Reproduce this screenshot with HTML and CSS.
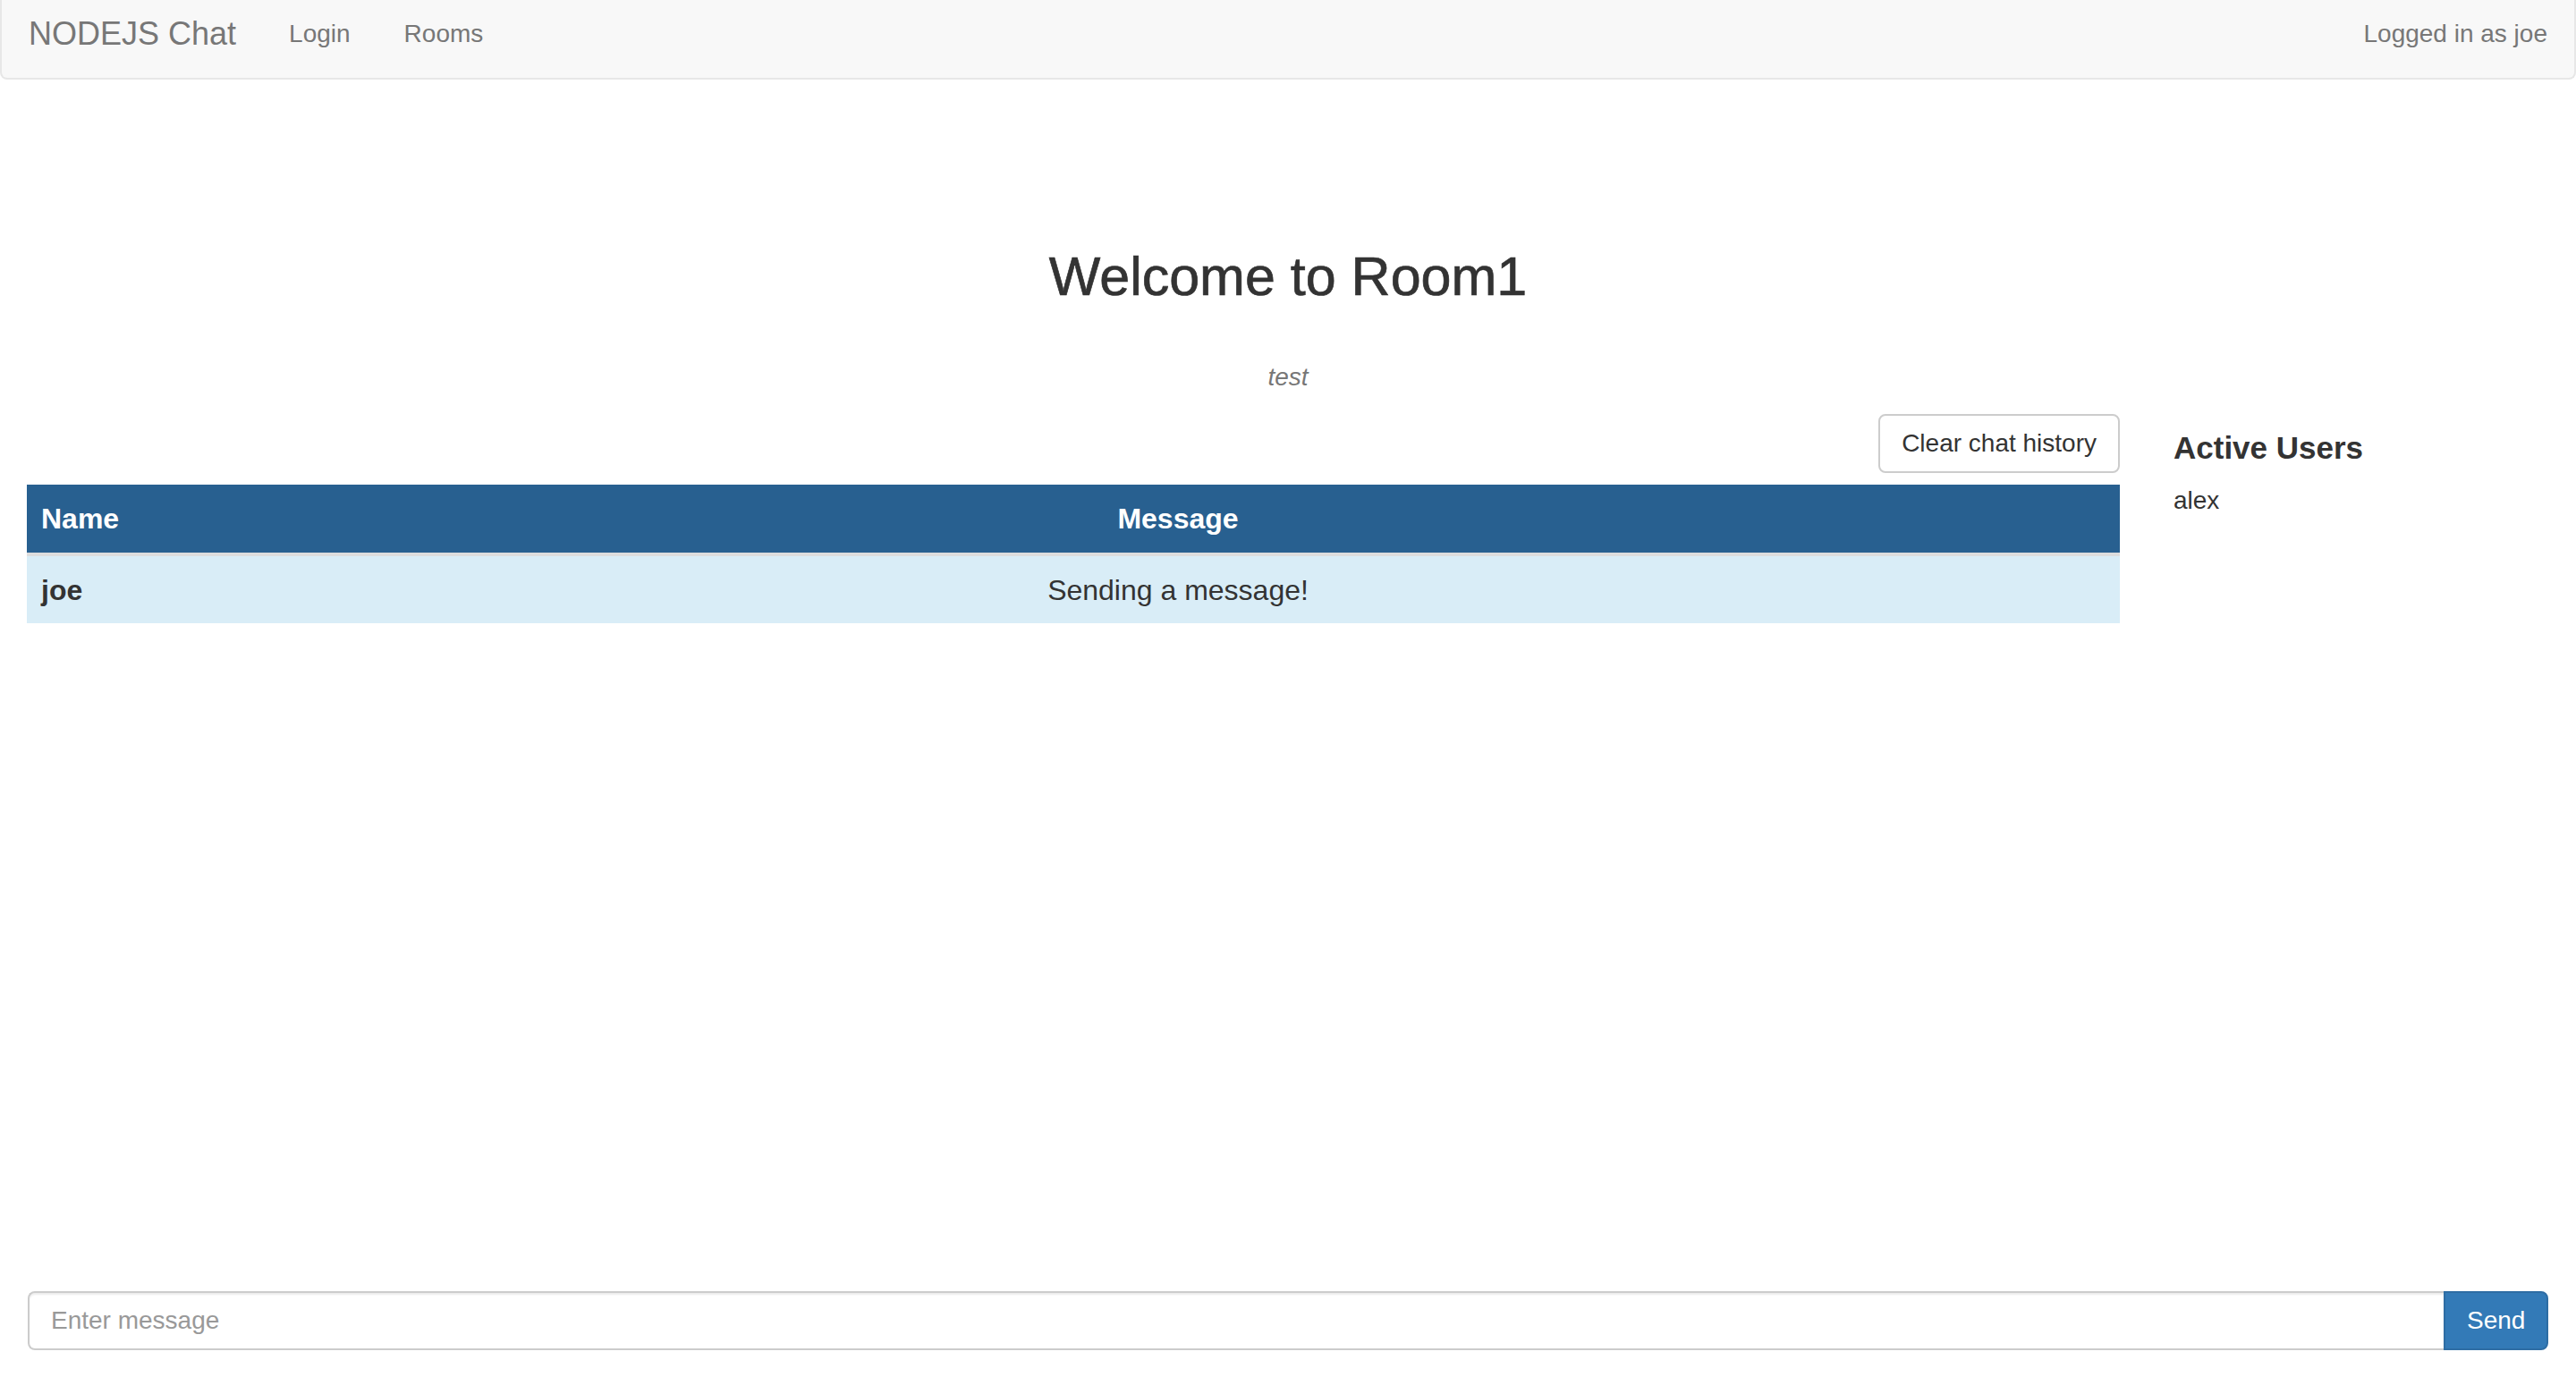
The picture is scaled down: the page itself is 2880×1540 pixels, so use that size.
FILE: index.html
```html
<!DOCTYPE html>
<html lang="en">
<head>
<meta charset="utf-8">
<title>NODEJS Chat</title>
<link rel="stylesheet" href="styles.css">
</head>
<body>
<nav class="navbar">
  <div class="nav-left">
    <a class="brand" href="#">NODEJS Chat</a>
    <a class="nav-link" href="#">Login</a>
    <a class="nav-link" href="#">Rooms</a>
  </div>
  <div class="nav-text">Logged in as joe</div>
</nav>
<main class="main">
  <h2 class="title">Welcome to Room1</h2>
  <p class="desc">test</p>
  <div class="row">
    <section class="chat-col">
      <div class="toolbar"><button class="btn" type="button">Clear chat history</button></div>
      <table class="chat-table">
        <colgroup><col class="col-name"><col></colgroup>
        <thead>
          <tr><th class="th-name">Name</th><th class="th-msg">Message</th></tr>
        </thead>
        <tbody>
          <tr><td class="td-name">joe</td><td class="td-msg">Sending a message!</td></tr>
        </tbody>
      </table>
    </section>
    <aside class="users-col">
      <h4 class="users-title">Active Users</h4>
      <div class="user">alex</div>
    </aside>
  </div>
</main>
<form class="composer">
  <input class="composer-input" type="text" placeholder="Enter message">
  <button class="btn-send" type="button">Send</button>
</form>
</body>
</html>
```

FILE: styles.css
```css
* { box-sizing: border-box; }
html, body { margin: 0; padding: 0; }
body {
  font-family: "Liberation Sans", Arial, Helvetica, sans-serif;
  font-size: 28px;
  line-height: 40px;
  color: #333;
  background: #fff;
  min-height: 100vh;
  display: flex;
  flex-direction: column;
}
a { text-decoration: none; }

.navbar {
  height: 89px;
  background: #f8f8f8;
  border: 2px solid #e7e7e7;
  border-top: 0;
  border-radius: 0 0 8px 8px;
  display: flex;
  justify-content: space-between;
  align-items: flex-start;
  padding: 18px 30px 0 30px;
  flex: none;
}
.nav-left { display: flex; align-items: flex-start; }
.brand {
  font-size: 36px;
  line-height: 40px;
  color: #777;
  margin-right: 29px;
}
.nav-link {
  color: #777;
  line-height: 40px;
  padding: 0 30px;
}
.nav-text { color: #777; line-height: 40px; }

.main { flex: 1; }
.title {
  margin: 187px 0 0 0;
  font-size: 61px;
  line-height: 66px;
  font-weight: 400;
  text-align: center;
  color: #333;
  -webkit-text-stroke: 0.7px #333;
}
.desc {
  margin: 60px 0 21px 0;
  text-align: center;
  font-style: italic;
  color: #777;
}
.row { display: flex; }
.chat-col { width: 2400px; padding: 0 30px; flex: none; }
.users-col { flex: 1; padding: 0 30px; }

.toolbar { display: flex; justify-content: flex-end; margin-bottom: 13px; }
.btn {
  font-family: inherit;
  font-size: 28px;
  line-height: 40px;
  color: #333;
  background: #fff;
  border: 2px solid #ccc;
  border-radius: 8px;
  padding: 11px 24px;
}

.chat-table {
  width: 100%;
  border-collapse: collapse;
  table-layout: fixed;
  font-size: 32px;
  line-height: 44px;
}
.col-name { width: 10%; }
.chat-table th {
  background: #286090;
  color: #fff;
  font-weight: 700;
  padding: 16px 16px;
  border-bottom: 4px solid #ddd;
}
.th-name { text-align: left; }
.th-msg { text-align: center; }
.chat-table td {
  background: #d9edf7;
  padding: 16px 16px 15px 16px;
}
.td-name { font-weight: 700; text-align: left; }
.td-msg { text-align: center; }

.users-title {
  margin: 18px 0 19px 0;
  font-size: 35px;
  line-height: 40px;
  font-weight: 700;
  color: #333;
}
.user { line-height: 40px; }

.composer {
  display: flex;
  margin: 0 31px 30px 31px;
  height: 66px;
  flex: none;
}
.composer-input {
  flex: 1;
  height: 66px;
  font-family: inherit;
  font-size: 28px;
  color: #555;
  border: 2px solid #ccc;
  border-right: 0;
  border-radius: 8px 0 0 8px;
  padding: 0 24px;
  box-shadow: inset 0 2px 2px rgba(0,0,0,0.075);
  outline: none;
}
.composer-input::placeholder { color: #999; }
.btn-send {
  width: 117px;
  height: 66px;
  font-family: inherit;
  font-size: 28px;
  color: #fff;
  background: #337ab7;
  border: 2px solid #2e6da4;
  border-radius: 0 8px 8px 0;
  padding: 0 24px;
}
```
